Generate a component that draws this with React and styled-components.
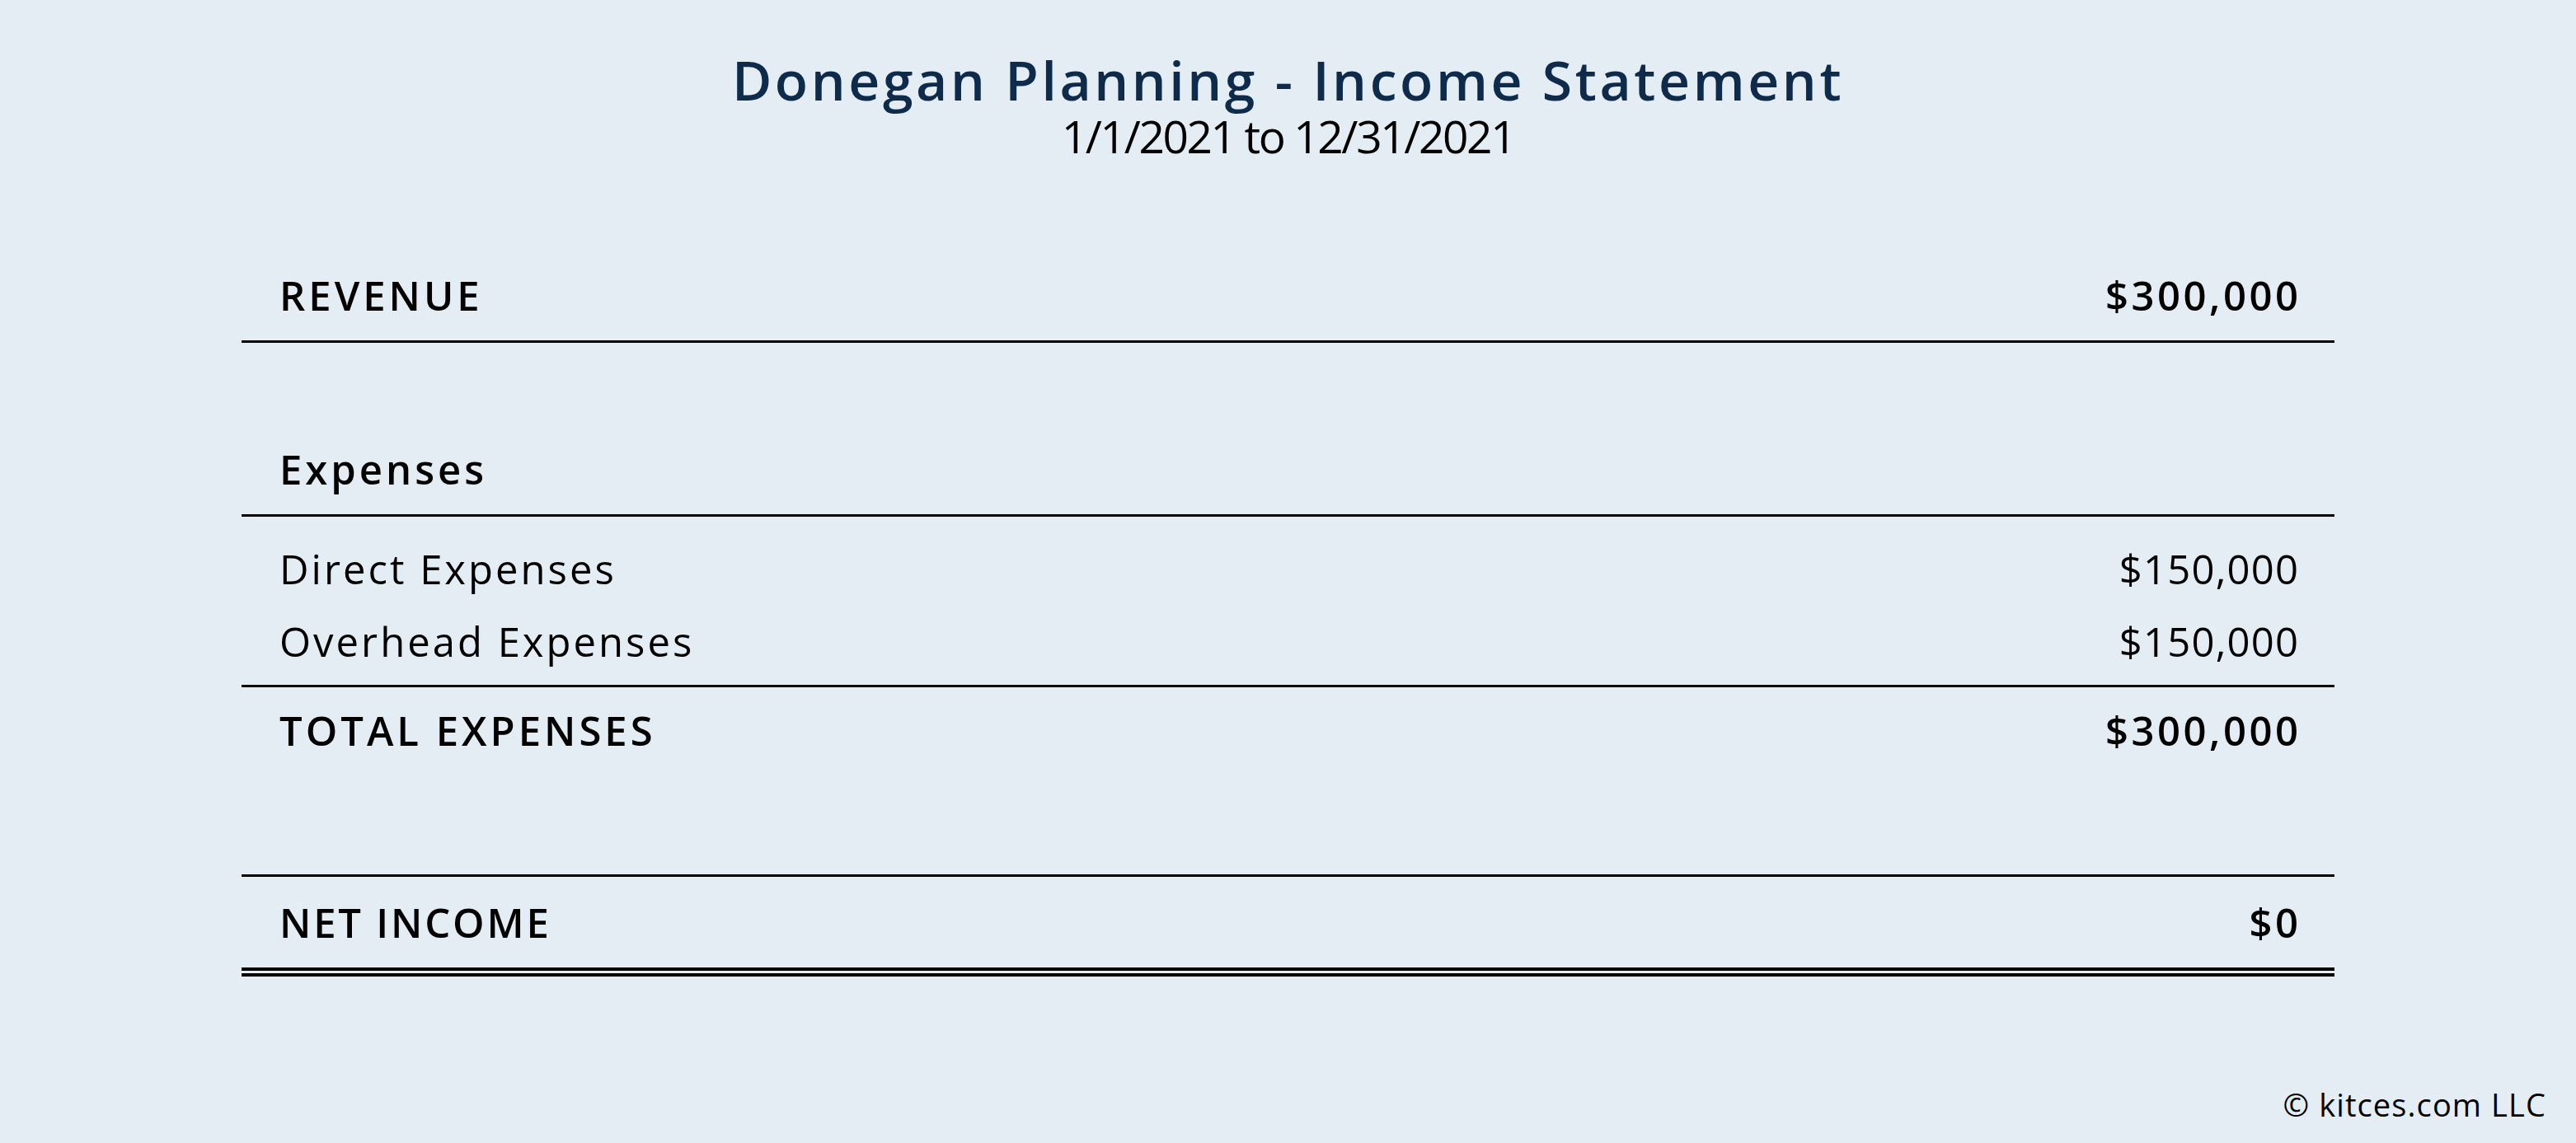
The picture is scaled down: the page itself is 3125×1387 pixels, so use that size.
import React from 'react'
import styled, { createGlobalStyle } from 'styled-components'

const GlobalStyle = createGlobalStyle`
  html, body {
    margin: 0;
    padding: 0;
    background: #e5edf4;
  }
  body {
    font-family: "Open Sans", "Noto Sans", sans-serif;
    color: #000;
  }
`;

const lines = [
  { label: 'Direct Expenses', amount: '$150,000' },
  { label: 'Overhead Expenses', amount: '$150,000' },
];

export default function App() {
  return (
    <Page>
      <GlobalStyle />
      <Header>
        <Title>Donegan Planning - Income Statement</Title>
        <Period>1/1/2021 to 12/31/2021</Period>
      </Header>

      <Statement>
        <Row height={110} rule="single">
          <Label strong>REVENUE</Label>
          <Amount strong>$300,000</Amount>
        </Row>

        <Row height={110} rule="single" gap={98}>
          <Label strong>Expenses</Label>
        </Row>

        <Items>
          {lines.map(l => (
            <Row key={l.label} height={88}>
              <Label>{l.label}</Label>
              <Amount>{l.amount}</Amount>
            </Row>
          ))}
        </Items>

        <Row height={104}>
          <Label strong>TOTAL EXPENSES</Label>
          <Amount strong>$300,000</Amount>
        </Row>

        <Row height={110} rule="double" top gap={123}>
          <Label strong spacing={2.8}>NET INCOME</Label>
          <Amount strong>$0</Amount>
        </Row>
      </Statement>

      <Footer>© kitces.com LLC</Footer>
    </Page>
  )
}

const Page = styled.div`
  min-height: 1387px;
  display: flex;
  flex-direction: column;
  box-sizing: border-box;
`;

const Header = styled.header`
  padding-top: 59px;
  text-align: center;
`;

const Title = styled.h1`
  margin: 0;
  font-size: 66px;
  line-height: 74px;
  font-weight: 600;
  letter-spacing: 3.6px;
  color: #0f2b4c;
`;

const Period = styled.div`
  margin-top: 2px;
  font-size: 55px;
  line-height: 60px;
  letter-spacing: -2.4px;
  color: #000;
`;

const Statement = styled.section`
  width: 2539px;
  margin: 108px auto 0;
  display: flex;
  flex-direction: column;
`;

const Row = styled.div`
  display: flex;
  justify-content: space-between;
  align-items: center;
  height: ${p => p.height}px;
  padding: 0 44px 0 46px;
  margin-top: ${p => p.gap || 0}px;
  border-top: ${p => (p.top ? '3px solid #000' : 'none')};
  border-bottom: ${p =>
    p.rule === 'double' ? '11px double #000' : p.rule === 'single' ? '3px solid #000' : 'none'};
`;

const Items = styled.div`
  padding: 19px 0 9px;
  border-bottom: 3px solid #000;
`;

const Label = styled.span`
  font-size: 49px;
  font-weight: ${p => (p.strong ? 600 : 400)};
  letter-spacing: ${p => p.spacing ?? (p.strong ? 4 : 3)}px;
`;

const Amount = styled.span`
  font-size: 49px;
  font-weight: ${p => (p.strong ? 600 : 400)};
  letter-spacing: ${p => (p.strong ? 3.5 : 1.2)}px;
  margin-right: ${p => (p.strong ? -3.5 : -1.2)}px;
`;

const Footer = styled.footer`
  margin-top: auto;
  padding: 0 36px 22px 0;
  text-align: right;
  font-size: 38px;
  line-height: 50px;
  letter-spacing: 1.1px;
`;
